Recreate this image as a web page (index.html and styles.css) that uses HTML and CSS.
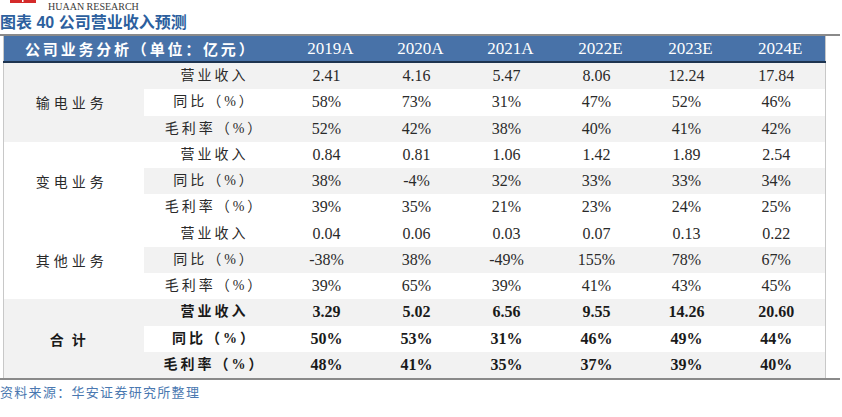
FILE: index.html
```html
<!DOCTYPE html>
<html lang="zh">
<head>
<meta charset="utf-8">
<link rel="stylesheet" href="styles.css">
</head>
<body>
<div class="brand">
  <svg class="logo" width="30" height="5" viewBox="0 0 30 5"><rect x="0" y="0" width="26" height="4" fill="#d42a2a"/><rect x="12" y="0" width="1.5" height="3" fill="#fff"/></svg>
  <span class="brand-text">HUAAN RESEARCH</span>
</div>
<div class="title">图表 40 公司营业收入预测</div>
<div class="frame">
<table class="grid">
  <colgroup>
    <col class="c-group"><col class="c-sub">
    <col class="c-year"><col class="c-year"><col class="c-year"><col class="c-year"><col class="c-year"><col class="c-year">
  </colgroup>
  <thead>
    <tr>
      <th colspan="2" class="h-label">公司业务分析（单位：亿元）</th>
      <th>2019A</th><th>2020A</th><th>2021A</th><th>2022E</th><th>2023E</th><th>2024E</th>
    </tr>
  </thead>
  <tbody class="g-odd">
    <tr class="shade"><td rowspan="3" class="grp">输电业务</td><td class="sub">营业收入</td><td>2.41</td><td>4.16</td><td>5.47</td><td>8.06</td><td>12.24</td><td>17.84</td></tr>
    <tr><td class="sub">同比（%）</td><td>58%</td><td>73%</td><td>31%</td><td>47%</td><td>52%</td><td>46%</td></tr>
    <tr class="shade"><td class="sub">毛利率（%）</td><td>52%</td><td>42%</td><td>38%</td><td>40%</td><td>41%</td><td>42%</td></tr>
  </tbody>
  <tbody class="g-even">
    <tr><td rowspan="3" class="grp">变电业务</td><td class="sub">营业收入</td><td>0.84</td><td>0.81</td><td>1.06</td><td>1.42</td><td>1.89</td><td>2.54</td></tr>
    <tr class="shade"><td class="sub">同比（%）</td><td>38%</td><td>-4%</td><td>32%</td><td>33%</td><td>33%</td><td>34%</td></tr>
    <tr><td class="sub">毛利率（%）</td><td>39%</td><td>35%</td><td>21%</td><td>23%</td><td>24%</td><td>25%</td></tr>
  </tbody>
  <tbody class="g-even">
    <tr><td rowspan="3" class="grp">其他业务</td><td class="sub">营业收入</td><td>0.04</td><td>0.06</td><td>0.03</td><td>0.07</td><td>0.13</td><td>0.22</td></tr>
    <tr class="shade"><td class="sub">同比（%）</td><td>-38%</td><td>38%</td><td>-49%</td><td>155%</td><td>78%</td><td>67%</td></tr>
    <tr><td class="sub">毛利率（%）</td><td>39%</td><td>65%</td><td>39%</td><td>41%</td><td>43%</td><td>45%</td></tr>
  </tbody>
  <tbody class="g-odd total">
    <tr class="shade"><td rowspan="3" class="grp">合计</td><td class="sub">营业收入</td><td>3.29</td><td>5.02</td><td>6.56</td><td>9.55</td><td>14.26</td><td>20.60</td></tr>
    <tr><td class="sub">同比（%）</td><td>50%</td><td>53%</td><td>31%</td><td>46%</td><td>49%</td><td>44%</td></tr>
    <tr class="shade"><td class="sub">毛利率（%）</td><td>48%</td><td>41%</td><td>35%</td><td>37%</td><td>39%</td><td>40%</td></tr>
  </tbody>
</table>
</div>
<div class="source">资料来源：华安证券研究所整理</div>
</body>
</html>
```

FILE: styles.css
```css
html, body {
  margin: 0;
  padding: 0;
  background: #ffffff;
}

body {
  width: 842px;
  height: 417px;
  overflow: hidden;
  font-family: "Liberation Serif", "Noto Sans CJK SC", serif;
  color: #262626;
}

.brand {
  height: 12px;
  display: flex;
  align-items: flex-start;
}

.logo {
  display: block;
  margin-left: 10px;
  margin-top: -1px;
}

.brand-text {
  margin-left: 8px;
  margin-top: 1px;
  font-family: "Liberation Serif", serif;
  font-size: 10px;
  line-height: 11px;
  color: #3a3a3a;
}

.title {
  height: 22px;
  line-height: 21px;
  font-family: "Liberation Sans", "Noto Sans CJK SC", sans-serif;
  font-weight: 700;
  font-size: 16px;
  color: #2c5f9e;
  letter-spacing: 0;
}

.frame {
  width: 840px;
  border-top: 2px solid #8a8a8a;
  border-bottom: 2px solid #8a8a8a;
}

.grid {
  margin-left: 3px;
  width: 822px;
  border-collapse: collapse;
  table-layout: fixed;
  border-left: 1px solid #c8c8c8;
  border-right: 1px solid #c8c8c8;
}

.c-group { width: 140px; }
.c-sub { width: 142px; }
.c-year { width: 90px; }

.grid thead th {
  height: 25px;
  padding: 0;
  background: #4872a8;
  color: #ffffff;
  font-weight: 400;
  font-size: 17px;
  text-align: center;
  border-bottom: 2px solid #1e3450;
}

.grid thead th.h-label {
  font-family: "Noto Sans CJK SC", sans-serif;
  font-size: 15px;
  font-weight: 700;
  letter-spacing: 2.8px;
  padding-right: 8px;
}

.grid td {
  height: 26.25px;
  padding: 0 8px 0 0;
  text-align: center;
  font-size: 16px;
  line-height: 18px;
  color: #2a2a2a;
  background: #ffffff;
}

.grid tr.shade td {
  background: #f2f2f2;
}

.grid td.sub {
  font-family: "Liberation Serif", "Noto Sans CJK SC", serif;
  font-size: 14px;
  letter-spacing: 3px;
  padding: 0;
}

.grid td.grp {
  font-family: "Noto Sans CJK SC", sans-serif;
  font-size: 14px;
  letter-spacing: 4px;
  padding: 0 4px 0 0;
}

.g-odd td.grp,
.g-odd tr.shade td.grp {
  background: #f2f2f2;
}

.g-even td.grp {
  background: #ffffff;
}

.total td {
  font-weight: 700;
  color: #1a1a1a;
}

.total td.grp {
  letter-spacing: 8px;
}

.source {
  margin-top: 4px;
  font-family: "Noto Sans CJK SC", sans-serif;
  font-size: 13px;
  line-height: 16px;
  letter-spacing: 1.3px;
  color: #4a78b0;
}
```
